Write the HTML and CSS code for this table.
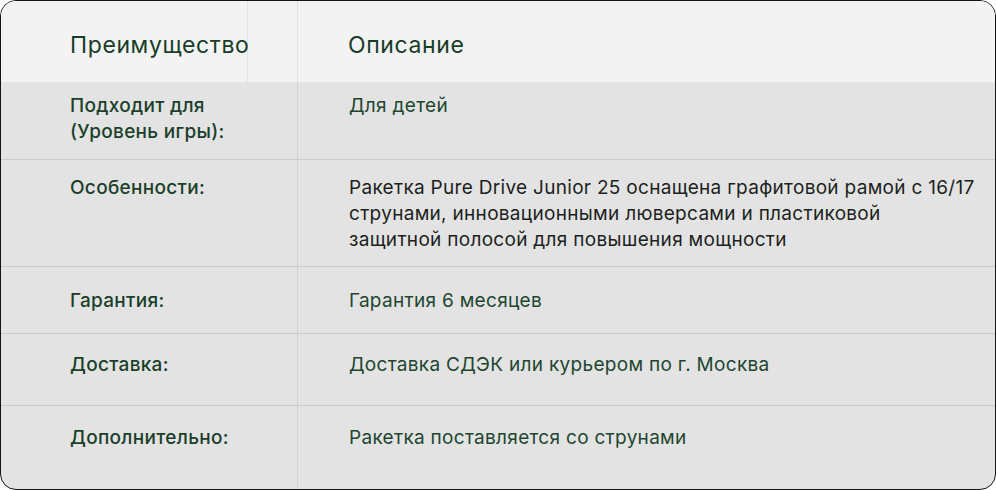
FILE: index.html
```html
<!DOCTYPE html>
<html lang="ru">
<head>
<meta charset="utf-8">
<link rel="stylesheet" href="styles.css">
</head>
<body>
<div class="card">
  <div class="head">
    <div class="h-cell h-first">Преимущество</div>
    <div class="h-gap"></div>
    <div class="h-cell h-desc">Описание</div>
  </div>
  <div class="row r1">
    <div class="label">Подходит для<br>(Уровень игры):</div>
    <div class="desc">Для детей</div>
  </div>
  <div class="row r2">
    <div class="label">Особенности:</div>
    <div class="desc dark">Ракетка Pure Drive Junior 25 оснащена графитовой рамой с 16/17<br>струнами, инновационными люверсами и пластиковой<br>защитной полосой для повышения мощности</div>
  </div>
  <div class="row r3">
    <div class="label">Гарантия:</div>
    <div class="desc">Гарантия 6 месяцев</div>
  </div>
  <div class="row r4">
    <div class="label">Доставка:</div>
    <div class="desc">Доставка СДЭК или курьером по г. Москва</div>
  </div>
  <div class="row r5">
    <div class="label">Дополнительно:</div>
    <div class="desc">Ракетка поставляется со струнами</div>
  </div>
</div>
</body>
</html>
```

FILE: styles.css
```css
* { box-sizing: border-box; }
html, body { margin: 0; padding: 0; background: #ffffff; }
body { font-family: Inter, "Noto Sans", sans-serif; }

.card {
  width: 996px;
  height: 490px;
  border: 1px solid #141414;
  border-radius: 16px;
  overflow: hidden;
  background: #e3e3e3;
  display: flex;
  flex-direction: column;
}

.head {
  height: 81px;
  background: #f3f3f3;
  display: grid;
  grid-template-columns: 247px 50px 1fr;
  flex: none;
}
.h-cell {
  font-size: 23px;
  line-height: 28px;
  letter-spacing: 0.6px;
  color: #173d28;
  padding-top: 30px;
  white-space: nowrap;
}
.h-first { padding-left: 69px; border-right: 1px solid #e4e4e4; }
.h-gap { border-right: 1px solid #e2e2e2; }
.h-desc { padding-left: 50px; }

.row {
  display: grid;
  grid-template-columns: 297px 1fr;
  border-top: 1px solid #cbcbcb;
  flex: none;
  font-size: 19px;
  letter-spacing: 0.3px;
  line-height: 26px;
}
.r1 { height: 77px; border-top: none; }
.r2 { height: 107px; }
.r3 { height: 67px; }
.r4 { height: 72px; }
.r5 { flex: 1; }

.label {
  padding-left: 69px;
  font-weight: 500;
  color: #1b3f2a;
  border-right: 1px solid #d3d3d3;
}
.desc {
  padding-left: 51px;
  color: #204630;
  white-space: nowrap;
}
.desc.dark { color: #1c1f1d; }

.r1 .label, .r1 .desc { padding-top: 11px; }
.r2 .label, .r2 .desc { padding-top: 15px; }
.r3 .label, .r3 .desc { padding-top: 21px; }
.r4 .label, .r4 .desc { padding-top: 18px; }
.r5 .label, .r5 .desc { padding-top: 19px; }
```
